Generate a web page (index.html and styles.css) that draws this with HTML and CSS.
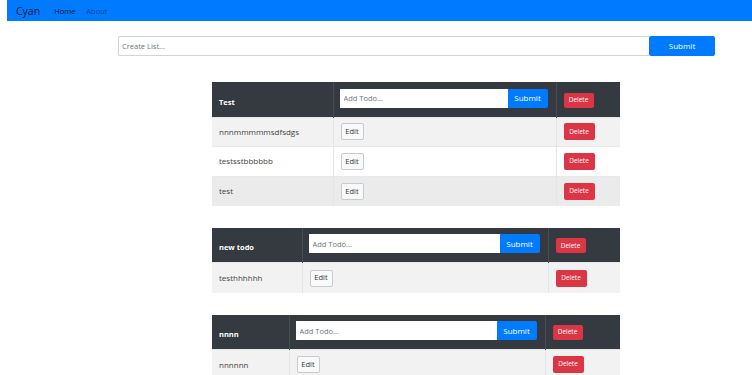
FILE: index.html
```html
<!DOCTYPE html>
<html lang="en">
<head>
    <meta charset="UTF-8">
    <meta name="viewport" content="width=device-width, initial-scale=1.0">
    <title>Cyan - Todo Lists</title>
    <link rel="stylesheet" href="styles.css">
</head>
<body>
    <nav class="navbar">
        <a class="brand" href="#">Cyan</a>
        <a class="nav-link active" href="#">Home</a>
        <a class="nav-link" href="#">About</a>
    </nav>

    <main class="page">
        <form class="list-form">
            <input class="field" type="text" placeholder="Create List...">
            <button class="btn btn-primary btn-wide" type="button">Submit</button>
        </form>

        <section class="lists">
            <table class="todo-table list-test">
                <colgroup><col class="c1"><col class="c2"><col class="c3"></colgroup>
                <thead>
                    <tr>
                        <th>Test</th>
                        <th>
                            <div class="input-group">
                                <input class="field" type="text" placeholder="Add Todo...">
                                <button class="btn btn-primary" type="button">Submit</button>
                            </div>
                        </th>
                        <th><button class="btn btn-danger btn-sm" type="button">Delete</button></th>
                    </tr>
                </thead>
                <tbody>
                    <tr>
                        <td>nnnmmmmmsdfsdgs</td>
                        <td><button class="btn btn-light" type="button">Edit</button></td>
                        <td><button class="btn btn-danger" type="button">Delete</button></td>
                    </tr>
                    <tr>
                        <td>testsstbbbbbb</td>
                        <td><button class="btn btn-light" type="button">Edit</button></td>
                        <td><button class="btn btn-danger" type="button">Delete</button></td>
                    </tr>
                    <tr class="row-hover">
                        <td>test</td>
                        <td><button class="btn btn-light" type="button">Edit</button></td>
                        <td><button class="btn btn-danger" type="button">Delete</button></td>
                    </tr>
                </tbody>
            </table>

            <table class="todo-table list-new">
                <colgroup><col class="c1"><col class="c2"><col class="c3"></colgroup>
                <thead>
                    <tr>
                        <th>new todo</th>
                        <th>
                            <div class="input-group">
                                <input class="field" type="text" placeholder="Add Todo...">
                                <button class="btn btn-primary" type="button">Submit</button>
                            </div>
                        </th>
                        <th><button class="btn btn-danger btn-sm" type="button">Delete</button></th>
                    </tr>
                </thead>
                <tbody>
                    <tr>
                        <td>testhhhhhh</td>
                        <td><button class="btn btn-light" type="button">Edit</button></td>
                        <td><button class="btn btn-danger" type="button">Delete</button></td>
                    </tr>
                </tbody>
            </table>

            <table class="todo-table list-nnnn">
                <colgroup><col class="c1"><col class="c2"><col class="c3"></colgroup>
                <thead>
                    <tr>
                        <th>nnnn</th>
                        <th>
                            <div class="input-group">
                                <input class="field" type="text" placeholder="Add Todo...">
                                <button class="btn btn-primary" type="button">Submit</button>
                            </div>
                        </th>
                        <th><button class="btn btn-danger btn-sm" type="button">Delete</button></th>
                    </tr>
                </thead>
                <tbody>
                    <tr>
                        <td>nnnnnn</td>
                        <td><button class="btn btn-light" type="button">Edit</button></td>
                        <td><button class="btn btn-danger" type="button">Delete</button></td>
                    </tr>
                </tbody>
            </table>
        </section>
    </main>
</body>
</html>
```

FILE: styles.css
```css
* {
    margin: 0;
    padding: 0;
    box-sizing: border-box;
}

body {
    font-family: 'Open Sans', 'Noto Sans', sans-serif;
    font-size: 8px;
    color: #444;
    background: #fff;
    overflow: hidden;
}

.navbar {
    margin-left: 7px;
    height: 21px;
    background: #007bff;
    display: flex;
    align-items: center;
    padding-left: 9px;
}

.navbar a {
    text-decoration: none;
}

.brand {
    font-size: 10.5px;
    color: rgba(0, 0, 0, 0.85);
    margin-right: 14px;
}

.nav-link {
    font-size: 7.5px;
    color: rgba(0, 0, 0, 0.5);
    margin-right: 11px;
}

.nav-link.active {
    color: rgba(0, 0, 0, 0.9);
}

.page {
    padding: 15px 0 0 118px;
}

.list-form {
    display: flex;
    width: 597px;
    height: 20px;
}

.field {
    flex: 1;
    min-width: 0;
    border: 1px solid #ced4da;
    border-right: 0;
    border-radius: 2px 0 0 2px;
    padding: 0 3px;
    font-family: inherit;
    font-size: 7.5px;
    color: #495057;
    background: #fff;
}

.field::placeholder {
    color: #6c757d;
}

.btn {
    font-family: inherit;
    border: 1px solid transparent;
    border-radius: 2px;
    cursor: pointer;
    line-height: 1;
}

.btn-primary {
    background: #007bff;
    color: #fff;
    font-size: 8px;
    padding: 0 7px;
}

.btn-wide {
    width: 66px;
}

.btn-danger {
    background: #dc3545;
    color: #fff;
    font-size: 6.5px;
    width: 31px;
    height: 17px;
}

.btn-sm {
    width: 30px;
    height: 15px;
}

.btn-light {
    background: #f8f9fa;
    border-color: #c9cbcd;
    color: #333;
    font-size: 7.5px;
    width: 23px;
    height: 17px;
}

.lists {
    margin: 26px 0 0 94px;
    display: flex;
    flex-direction: column;
    gap: 22px;
}

.todo-table {
    width: 408px;
    border-collapse: collapse;
    table-layout: fixed;
}

.list-test .c1 { width: 121px; }
.list-test .c2 { width: 223px; }
.list-new .c1 { width: 90px; }
.list-new .c2 { width: 246px; }
.list-nnnn .c1 { width: 77px; }
.list-nnnn .c2 { width: 256px; }

.todo-table th {
    background: #343a40;
    color: #fff;
    height: 35px;
    padding: 0 7px 9px;
    text-align: left;
    vertical-align: bottom;
    font-weight: 700;
    font-size: 7.5px;
    line-height: 12px;
}

.todo-table th + th {
    border-left: 1px solid #454d55;
}

.todo-table th:nth-child(2) {
    padding: 0 8px 9px 6px;
}

.input-group {
    display: flex;
    height: 19px;
}

.input-group .field {
    border-color: #fff;
    border-radius: 1px 0 0 1px;
}

.input-group .btn-primary {
    width: 40px;
    padding: 0;
    border-radius: 0 2px 2px 0;
}

.todo-table td {
    height: 29.67px;
    padding: 0 7px;
    vertical-align: middle;
    border-top: 1px solid #e6e8ea;
    line-height: 12px;
}

.todo-table td + td {
    border-left: 1px solid #e3e5e7;
}

.todo-table tbody tr:nth-child(odd) {
    background: #f2f2f2;
}

.todo-table tbody tr.row-hover {
    background: #ebebeb;
}
```
